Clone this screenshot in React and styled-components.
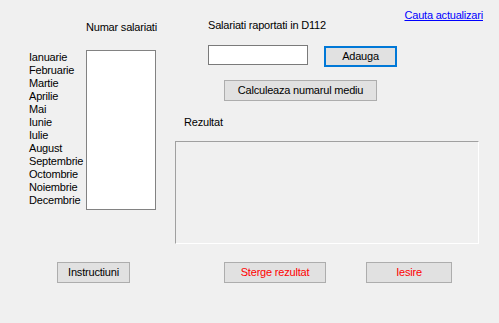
import React from 'react'
import styled, { createGlobalStyle } from 'styled-components';

const Global = createGlobalStyle`
    body{
        margin:0;
        background:#f0f0f0;
    }
`;

const Form = styled.div`
    width:499px;
    height:323px;
    background:#f0f0f0;
    font-family:"Liberation Sans", Arial, sans-serif;
    font-size:11px;
    letter-spacing:-0.2px;
    line-height:13px;
    color:#000;
    overflow:hidden;
`;

const Top = styled.div`
    display:flex;
    align-items:flex-start;
`;

const Months = styled.div`
    width:57px;
    margin-left:29px;
    margin-top:51px;
    display:flex;
    flex-direction:column;
`;

const ListCol = styled.div`
    width:70px;
    display:flex;
    flex-direction:column;
`;

const Label = styled.div`
    white-space:nowrap;
    margin-top:${p => p.top || 0}px;
    margin-left:${p => p.left || 0}px;
`;

const ListBox = styled.div`
    margin-top:16px;
    width:70px;
    height:160px;
    box-sizing:border-box;
    background:#fff;
    border:1px solid #828282;
`;

const RightCol = styled.div`
    margin-left:19px;
    width:308px;
    display:flex;
    flex-direction:column;
`;

const Header = styled.div`
    margin-top:9px;
    display:flex;
    align-items:flex-start;
`;

const Link = styled.a`
    margin-left:auto;
    color:#0000ff;
    text-decoration:underline;
    white-space:nowrap;
    cursor:pointer;
`;

const InputRow = styled.div`
    margin-top:13px;
    margin-left:33px;
    display:flex;
    align-items:flex-start;
`;

const TextBox = styled.div`
    width:100px;
    height:20px;
    box-sizing:border-box;
    background:#fff;
    border:1px solid #7a7a7a;
`;

const Button = styled.button`
    width:${p => p.w}px;
    height:21px;
    box-sizing:border-box;
    margin:${p => p.m || '0'};
    padding:0;
    background:#e1e1e1;
    border:${p => p.focused ? '2px solid #0078d7' : '1px solid #adadad'};
    color:${p => p.danger ? '#ff0000' : '#000'};
    font-family:inherit;
    font-size:11px;
    letter-spacing:-0.2px;
    line-height:13px;
    flex-shrink:0;
`;

const ResultBox = styled.div`
    margin-top:12px;
    width:304px;
    height:103px;
    box-sizing:border-box;
    background:#f0f0f0;
    border-top:1px solid #a0a0a0;
    border-left:1px solid #a0a0a0;
    border-right:1px solid #fff;
    border-bottom:1px solid #fff;
`;

const Bottom = styled.div`
    margin-top:18px;
    display:flex;
`;

const months = ['Ianuarie','Februarie','Martie','Aprilie','Mai','Iunie','Iulie','August','Septembrie','Octombrie','Noiembrie','Decembrie'];

const App = () => {
    return (
        <Form>
            <Global/>
            <Top>
                <Months>
                    {months.map(m => <div key={m}>{m}</div>)}
                </Months>
                <ListCol>
                    <Label top={21}>Numar salariati</Label>
                    <ListBox/>
                </ListCol>
                <RightCol>
                    <Header>
                        <Label top={10} left={33}>Salariati raportati in D112</Label>
                        <Link>Cauta actualizari</Link>
                    </Header>
                    <InputRow>
                        <TextBox/>
                        <Button w={73} m="1px 0 0 16px" focused>Adauga</Button>
                    </InputRow>
                    <Button w={153} m="13px 0 0 49px">Calculeaza numarul mediu</Button>
                    <Label top={15} left={9}>Rezultat</Label>
                    <ResultBox/>
                </RightCol>
            </Top>
            <Bottom>
                <Button w={73} m="0 0 0 57px">Instructiuni</Button>
                <Button w={102} m="0 0 0 94px" danger>Sterge rezultat</Button>
                <Button w={86} m="0 0 0 40px" danger>Iesire</Button>
            </Bottom>
        </Form>
    )
};

export default App
